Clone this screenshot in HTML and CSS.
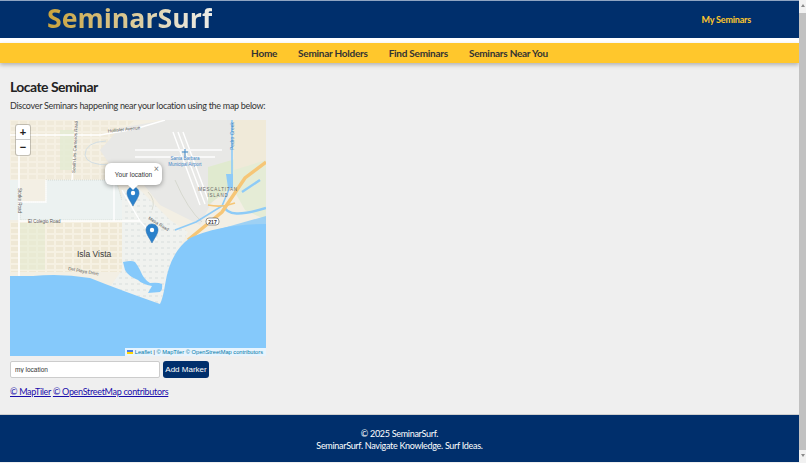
FILE: index.html
```html
<!DOCTYPE html>
<html>
  <head>
    <title>SeminarSurf</title>
    <link rel="stylesheet" href="styles.css">
  </head>
  <body>
    <div class="page">
      <header class="top-bar">
        <a class="logo" href="#">SeminarSurf</a>
        <a class="my-seminars" href="#">My Seminars</a>
      </header>

      <nav class="main-nav">
        <a href="#">Home</a>
        <a href="#">Seminar Holders</a>
        <a href="#">Find Seminars</a>
        <a href="#">Seminars Near You</a>
      </nav>

      <main class="content">
        <h1>Locate Seminar</h1>
        <p class="intro">Discover Seminars happening near your location using the map below:</p>

        <div class="map">
          <svg class="map-tiles" viewBox="0 0 256 236" width="256" height="236">
            <defs>
              <pattern id="blocks" width="9" height="6" patternUnits="userSpaceOnUse">
                <rect width="9" height="6" fill="#f6f1e3"/>
                <rect x="1" y="1" width="7" height="4" fill="#efe8d5"/>
              </pattern>
              <pattern id="houses" width="6" height="6" patternUnits="userSpaceOnUse">
                <rect width="6" height="6" fill="#f0f2ef"/>
                <rect x="1" y="1" width="3" height="2" fill="#e4e8e6"/>
              </pattern>
            </defs>

            <!-- land -->
            <rect width="256" height="236" fill="#f3efe4"/>
            <path d="M0 0H125L110 12L118 60H0Z" fill="url(#blocks)" opacity=".7"/>
            <path d="M0 102H112V152H0Z" fill="url(#blocks)"/>
            <path d="M0 60H10V100H0Z" fill="#ecf2f1"/>
            <path d="M36 60H106L118 100H10V82H36Z" fill="#ecf2f1" stroke="#b9c2b8" stroke-width=".5" stroke-dasharray="1 1"/>
            <path d="M50 10H64V50H50Z" fill="#e3ebd2" opacity=".8"/>
            <path d="M10 103H35V150H10Z" fill="#e3ebd2" opacity=".55"/>
            <path d="M112 70H130L160 100L178 112L165 135L158 158L150 184L100 167L112 150Z" fill="url(#houses)"/>

            <!-- airport -->
            <path d="M110 8L155 0H222V60L200 85L190 105L150 85L130 60L100 45L90 30Z" fill="#e8e8e6"/>
            <path d="M96 21Q75 22 75 35Q76 45 100 45L118 54" fill="none" stroke="#c9d9e4" stroke-width=".8"/>
            <path d="M163 12L190 85M168 12L195 84M173 12L199 82" stroke="#fff" stroke-width="1.4" fill="none"/>
            <path d="M125 30H212M125 37H205" stroke="#f8f8f8" stroke-width="2" fill="none"/>
            <path d="M138 72Q146 80 142 90M165 60Q178 90 192 102" stroke="#c9cdc0" stroke-width=".6" fill="none"/>

            <!-- slough and island -->
            <path d="M198 47L222 40V67L198 85Z" fill="#e0eacf"/>
            <path d="M222 40L256 30V100L235 90L222 67Z" fill="#e5ecd6"/>
            <path d="M222 0H256V40L224 50Z" fill="#f0ead9"/>
            <path d="M216 54H223V68H218Z" fill="#8ecbf7"/>
            <path d="M222 0V62L212 86L186 102L165 110" stroke="#8ecbf7" stroke-width="1.6" fill="none"/>
            <path d="M214 86Q218 100 256 88M232 72L250 60" stroke="#8ecbf7" stroke-width="2.4" fill="none"/>
            <path d="M178 118L256 96V105L200 118Z" fill="#8ecbf7" opacity=".85"/>

            <!-- highway -->
            <path d="M178 120L212 92L235 58L256 42" stroke="#f6c677" stroke-width="3.4" fill="none"/>
            <path d="M198 85Q212 88 225 83" stroke="#f6c677" stroke-width="1.6" fill="none"/>

            <!-- roads -->
            <path d="M0 15H90L125 9L155 0M9 15V196M66 0L62 60M9 101H130L147 120M104 60V101M36 60V82H9M130 101L112 70" stroke="#fff" stroke-width="1.4" fill="none"/>

            <!-- ocean -->
            <path d="M0 156L23 156Q50 153 80 158Q110 170 150 184Q153 178 155 165Q160 132 180 118Q210 104 256 104V236H0Z" fill="#85c9fb"/>
            <path d="M113 142Q122 140 125 142Q128 146 130 150Q134 160 140 163Q148 162 152 164Q153 169 150 172L138 173L142 166Q132 164 128 160Q118 156 115 150Z" fill="#85c9fb"/>

            <!-- labels -->
            <g class="map-label">
              <text x="98" y="12.500" transform="rotate(-6 98 12)">Hollister Avenue</text>
              <text transform="translate(65 53) rotate(-87)">South Los Carneros Road</text>
              <text transform="translate(8 68) rotate(90)">Storke Road</text>
              <text x="18" y="103">El Colegio Road</text>
              <text x="138" y="99" transform="rotate(32 138 99)">Mesa Road</text>
              <text x="58" y="150" transform="rotate(10 58 150)">Del Playa Drive</text>
            </g>
            <text class="map-town" x="67" y="137">Isla Vista</text>
            <g class="map-island">
              <text x="208" y="71">MESCALTITAN</text>
              <text x="208" y="77">ISLAND</text>
            </g>
            <g class="map-airport">
              <path d="M174.500 29H175.500V36H174.500ZM172 31.500H178V32.500H172Z" fill="#3d85c6"/>
              <text x="175" y="40">Santa Barbara</text>
              <text x="175" y="45.500">Municipal Airport</text>
            </g>
            <text class="map-creek" transform="translate(223.500 30) rotate(-90)">Pedro Creek</text>
            <rect x="196" y="98" width="13" height="7" rx="3" fill="#fff" stroke="#555" stroke-width=".6"/>
            <text class="map-shield" x="202.500" y="103.500">217</text>

            <!-- markers -->
            <g class="pin" transform="translate(123 86)">
              <path d="M0 -19C-4 -19 -6 -16 -6 -13C-6 -9 -2 -4 0 0C2 -4 6 -9 6 -13C6 -16 4 -19 0 -19Z"/>
              <circle cx="0" cy="-13" r="2.200"/>
            </g>
            <g class="pin" transform="translate(142 123)">
              <path d="M0 -19C-4 -19 -6 -16 -6 -13C-6 -9 -2 -4 0 0C2 -4 6 -9 6 -13C6 -16 4 -19 0 -19Z"/>
              <circle cx="0" cy="-13" r="2.200"/>
            </g>
          </svg>

          <div class="zoom-control">
            <span class="zoom-in">+</span>
            <span class="zoom-out">&minus;</span>
          </div>

          <div class="popup">
            <span class="popup-text">Your location</span>
            <span class="popup-close">&times;</span>
            <span class="popup-tip"></span>
          </div>

          <div class="attribution">
            <span class="flag"></span>
            <a href="#">Leaflet</a> | <a href="#">&copy; MapTiler</a> <a href="#">&copy; OpenStreetMap contributors</a>
          </div>
        </div>

        <form class="marker-form">
          <input type="text" value="my location">
          <button type="button">Add Marker</button>
        </form>

        <p class="credits"><a href="#">&copy; MapTiler</a> <a href="#">&copy; OpenStreetMap contributors</a></p>
      </main>

      <footer class="site-footer">
        <p>&copy; 2025 SeminarSurf.</p>
        <p>SeminarSurf. Navigate Knowledge. Surf Ideas.</p>
      </footer>
    </div>

    <div class="scrollbar">
      <span class="arrow-up"></span>
      <span class="thumb"></span>
      <span class="arrow-down"></span>
    </div>
  </body>
</html>
```

FILE: styles.css
```css
html, body {
  height: 100%;
}

body {
  font-family: Lato, Arial, sans-serif;
  margin: 0;
  padding: 0;
  display: flex;
  background-color: #EFEFEF;
  overflow: hidden;
}

.page {
  flex: 1;
  min-width: 0;
}

/* header */
.top-bar {
  box-sizing: border-box;
  height: 43px;
  padding: 2px 48px 0 47px;
  display: flex;
  justify-content: space-between;
  background-color: #002F6C;
  border-top: 1px solid #8FA5C2;
  border-bottom: 5px solid #FFFFFF;
}

.logo {
  font-family: "Open Sans", Arial, sans-serif;
  font-size: 26.700px;
  font-weight: 700;
  line-height: 30px;
  text-decoration: none;
  color: transparent;
  background: linear-gradient(90deg, #C9A33C, #E6E0CC 80%, #EDEDE8);
  -webkit-background-clip: text;
  background-clip: text;
}

.my-seminars {
  font-size: 9px;
  font-weight: 700;
  letter-spacing: -0.2px;
  line-height: 12px;
  margin-top: 11px;
  text-decoration: none;
  color: #FFC72C;
}

.main-nav {
  height: 20px;
  display: flex;
  justify-content: center;
  align-items: center;
  gap: 21px;
  background-color: #FFC72C;
  box-shadow: 0 2px 4px rgba(0, 0, 0, 0.25);
}

.main-nav a {
  font-size: 10px;
  font-weight: 700;
  letter-spacing: -0.25px;
  text-decoration: none;
  color: #333333;
}

/* main */
.content {
  padding: 0 10px;
  height: 351px;
  overflow: hidden;
}

h1 {
  font-size: 14px;
  font-weight: 700;
  letter-spacing: -0.55px;
  line-height: 20px;
  margin: 14px 0 0;
  color: #222222;
}

.intro {
  font-size: 9px;
  letter-spacing: -0.3px;
  line-height: 12px;
  margin: 3px 0 8px;
  color: #333333;
}

.map {
  position: relative;
  width: 256px;
  height: 236px;
  overflow: hidden;
}

.map-tiles {
  display: block;
}

.map-label text {
  font-family: "Liberation Sans", Arial, sans-serif;
  font-size: 4.500px;
  fill: #555555;
}

.map-town {
  font-family: "Liberation Sans", Arial, sans-serif;
  font-size: 8.500px;
  fill: #3C3C3C;
}

.map-island text {
  font-family: "Liberation Sans", Arial, sans-serif;
  font-size: 4.500px;
  letter-spacing: 0.8px;
  fill: #666666;
  text-anchor: middle;
}

.map-airport text {
  font-family: "Liberation Sans", Arial, sans-serif;
  font-size: 4.500px;
  fill: #3D85C6;
  text-anchor: middle;
}

.map-creek {
  font-family: "Liberation Sans", Arial, sans-serif;
  font-size: 5px;
  fill: #3D85C6;
}

.map-shield {
  font-family: "Liberation Sans", Arial, sans-serif;
  font-size: 5px;
  font-weight: 700;
  fill: #333333;
  text-anchor: middle;
}

.pin path {
  fill: #2A81CB;
  stroke: #2A6FAE;
  stroke-width: 0.5;
}

.pin circle {
  fill: #FFFFFF;
}

.zoom-control {
  position: absolute;
  top: 5px;
  left: 6px;
  width: 14px;
  display: flex;
  flex-direction: column;
  background-color: #FFFFFF;
  border-radius: 2px;
  box-shadow: 0 0 0 1px rgba(0, 0, 0, 0.2);
}

.zoom-control span {
  height: 15px;
  font-family: "Liberation Sans", Arial, sans-serif;
  font-size: 11px;
  font-weight: 700;
  line-height: 15px;
  text-align: center;
  color: #222222;
}

.zoom-in {
  border-bottom: 1px solid #CCCCCC;
  box-sizing: border-box;
}

.popup {
  position: absolute;
  left: 95px;
  top: 43px;
  width: 57px;
  height: 22px;
  display: flex;
  align-items: center;
  justify-content: center;
  background-color: #FFFFFF;
  border-radius: 6px;
  box-shadow: 0 1px 5px rgba(0, 0, 0, 0.4);
}

.popup-text {
  font-family: "Liberation Sans", Arial, sans-serif;
  font-size: 6.500px;
  color: #333333;
}

.popup-close {
  position: absolute;
  top: 1px;
  right: 3px;
  font-size: 9px;
  line-height: 10px;
  color: #757575;
}

.popup-tip {
  position: absolute;
  left: 23px;
  bottom: -5px;
  border-left: 5px solid transparent;
  border-right: 5px solid transparent;
  border-top: 5px solid #FFFFFF;
}

.attribution {
  position: absolute;
  right: 0;
  bottom: 0;
  height: 8px;
  padding: 0 3px 0 2px;
  font-family: "Liberation Sans", Arial, sans-serif;
  font-size: 5.700px;
  line-height: 8px;
  color: #333333;
  background-color: rgba(255, 255, 255, 0.8);
}

.attribution a {
  color: #0078A8;
  text-decoration: none;
}

.flag {
  display: inline-block;
  width: 6px;
  height: 4px;
  background: linear-gradient(#4C7BE1 50%, #FFD500 50%);
}

.marker-form {
  margin-top: 5px;
  display: flex;
  align-items: center;
  gap: 3px;
}

.marker-form input {
  box-sizing: border-box;
  width: 150px;
  height: 17px;
  padding: 0 4px;
  font-family: "Liberation Sans", Arial, sans-serif;
  font-size: 6.500px;
  color: #333333;
  background-color: #FFFFFF;
  border: 1px solid #CCCCCC;
  border-radius: 2px;
}

.marker-form button {
  width: 46px;
  height: 17px;
  padding: 0;
  font-family: "Liberation Sans", Arial, sans-serif;
  font-size: 8px;
  color: #FFFFFF;
  background-color: #002F6C;
  border: none;
  border-radius: 3px;
}

.credits {
  font-size: 9px;
  letter-spacing: -0.3px;
  line-height: 12px;
  margin: 8px 0 0;
}

.credits a {
  color: #1A0DAB;
}

/* footer */
.site-footer {
  height: 48px;
  padding-top: 13px;
  box-sizing: border-box;
  text-align: center;
  color: #FFFFFF;
  background-color: #002F6C;
  border-top: 1px solid #CFCFCF;
}

.site-footer p {
  font-size: 9px;
  letter-spacing: -0.3px;
  line-height: 12px;
  margin: 0;
}

/* window scrollbar */
.scrollbar {
  width: 7px;
  display: flex;
  flex-direction: column;
  align-items: stretch;
  background-color: #F1F1F1;
}

.thumb {
  flex: 1;
  background-color: #C1C1C1;
}

.arrow-up, .arrow-down {
  height: 13px;
  position: relative;
}

.arrow-up::after, .arrow-down::after {
  content: "";
  position: absolute;
  left: 2px;
  top: 4px;
  border-left: 2px solid transparent;
  border-right: 2px solid transparent;
}

.arrow-up::after {
  border-bottom: 3px solid #8A8A8A;
}

.arrow-down::after {
  border-top: 3px solid #8A8A8A;
}
```
